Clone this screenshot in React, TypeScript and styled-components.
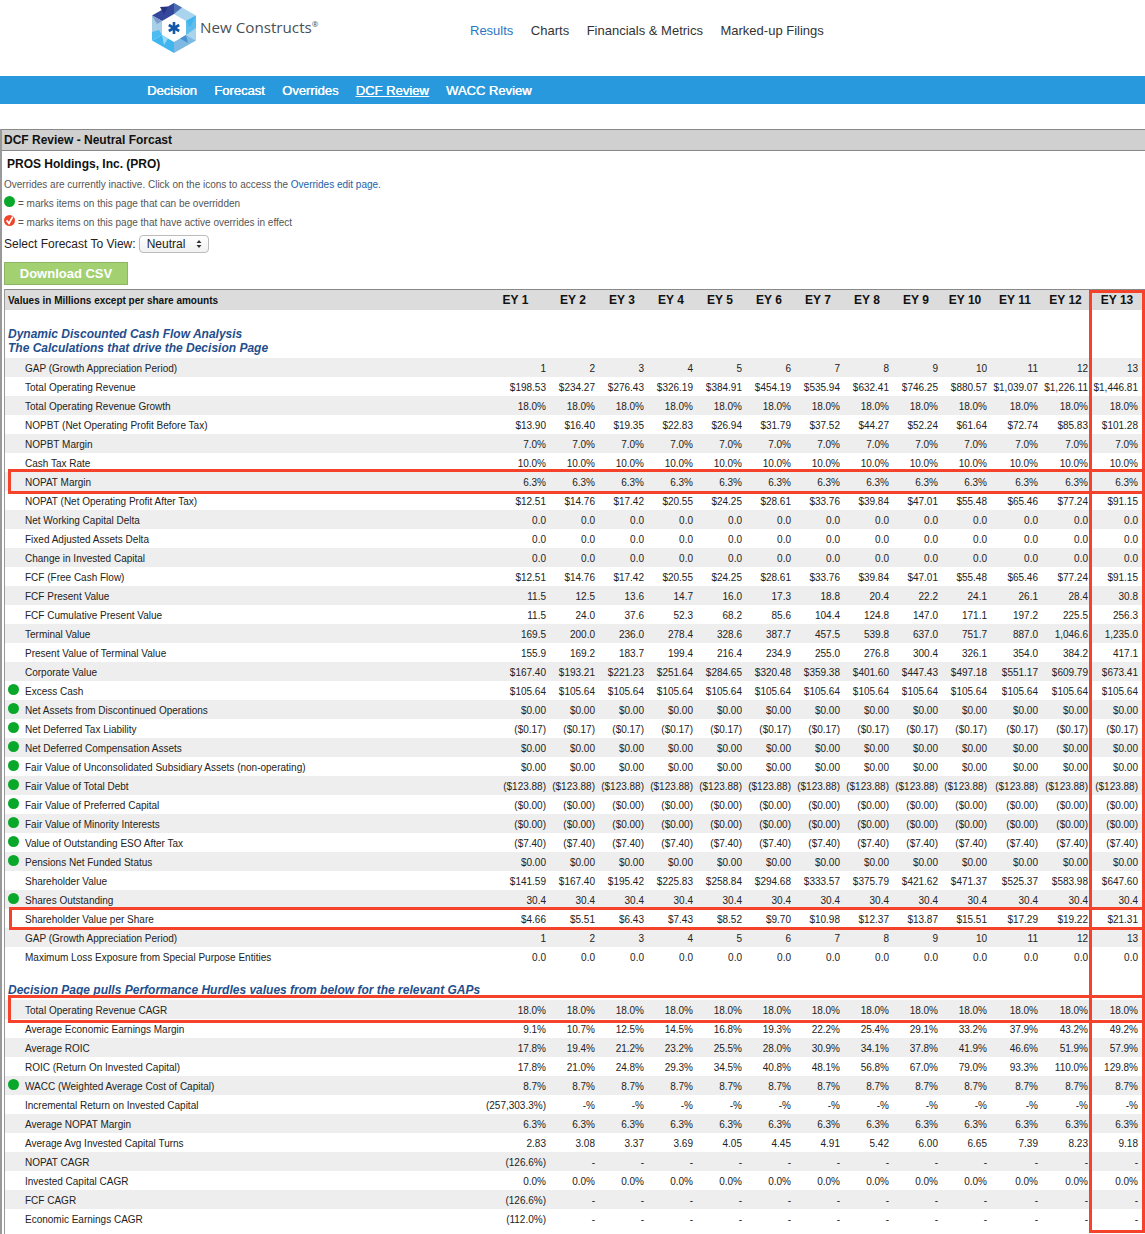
import React from 'react'
import styled, { createGlobalStyle } from 'styled-components'

const FONT = '"Liberation Sans", Arial, sans-serif'

type Row = { label: string; values: string[]; dot?: boolean }

const same = (v: string, n = 13) => Array.from({ length: n }, () => v)
const money = (list: string) => list.split(' ').map((v) => '$' + v)
const pct = (list: string) => list.split(' ').map((v) => v + '%')
const gap = Array.from({ length: 13 }, (_, i) => String(i + 1))
const nopat = money('12.51 14.76 17.42 20.55 24.25 28.61 33.76 39.84 47.01 55.48 65.46 77.24 91.15')

const calcRows: Row[] = [
  { label: 'GAP (Growth Appreciation Period)', values: gap },
  { label: 'Total Operating Revenue', values: money('198.53 234.27 276.43 326.19 384.91 454.19 535.94 632.41 746.25 880.57 1,039.07 1,226.11 1,446.81') },
  { label: 'Total Operating Revenue Growth', values: same('18.0%') },
  { label: 'NOPBT (Net Operating Profit Before Tax)', values: money('13.90 16.40 19.35 22.83 26.94 31.79 37.52 44.27 52.24 61.64 72.74 85.83 101.28') },
  { label: 'NOPBT Margin', values: same('7.0%') },
  { label: 'Cash Tax Rate', values: same('10.0%') },
  { label: 'NOPAT Margin', values: same('6.3%') },
  { label: 'NOPAT (Net Operating Profit After Tax)', values: nopat },
  { label: 'Net Working Capital Delta', values: same('0.0') },
  { label: 'Fixed Adjusted Assets Delta', values: same('0.0') },
  { label: 'Change in Invested Capital', values: same('0.0') },
  { label: 'FCF (Free Cash Flow)', values: nopat },
  { label: 'FCF Present Value', values: '11.5 12.5 13.6 14.7 16.0 17.3 18.8 20.4 22.2 24.1 26.1 28.4 30.8'.split(' ') },
  { label: 'FCF Cumulative Present Value', values: '11.5 24.0 37.6 52.3 68.2 85.6 104.4 124.8 147.0 171.1 197.2 225.5 256.3'.split(' ') },
  { label: 'Terminal Value', values: '169.5 200.0 236.0 278.4 328.6 387.7 457.5 539.8 637.0 751.7 887.0 1,046.6 1,235.0'.split(' ') },
  { label: 'Present Value of Terminal Value', values: '155.9 169.2 183.7 199.4 216.4 234.9 255.0 276.8 300.4 326.1 354.0 384.2 417.1'.split(' ') },
  { label: 'Corporate Value', values: money('167.40 193.21 221.23 251.64 284.65 320.48 359.38 401.60 447.43 497.18 551.17 609.79 673.41') },
  { label: 'Excess Cash', values: same('$105.64'), dot: true },
  { label: 'Net Assets from Discontinued Operations', values: same('$0.00'), dot: true },
  { label: 'Net Deferred Tax Liability', values: same('($0.17)'), dot: true },
  { label: 'Net Deferred Compensation Assets', values: same('$0.00'), dot: true },
  { label: 'Fair Value of Unconsolidated Subsidiary Assets (non-operating)', values: same('$0.00'), dot: true },
  { label: 'Fair Value of Total Debt', values: same('($123.88)'), dot: true },
  { label: 'Fair Value of Preferred Capital', values: same('($0.00)'), dot: true },
  { label: 'Fair Value of Minority Interests', values: same('($0.00)'), dot: true },
  { label: 'Value of Outstanding ESO After Tax', values: same('($7.40)'), dot: true },
  { label: 'Pensions Net Funded Status', values: same('$0.00'), dot: true },
  { label: 'Shareholder Value', values: money('141.59 167.40 195.42 225.83 258.84 294.68 333.57 375.79 421.62 471.37 525.37 583.98 647.60') },
  { label: 'Shares Outstanding', values: same('30.4'), dot: true },
  { label: 'Shareholder Value per Share', values: money('4.66 5.51 6.43 7.43 8.52 9.70 10.98 12.37 13.87 15.51 17.29 19.22 21.31') },
  { label: 'GAP (Growth Appreciation Period)', values: gap },
  { label: 'Maximum Loss Exposure from Special Purpose Entities', values: same('0.0') },
]

const hurdleRows: Row[] = [
  { label: 'Total Operating Revenue CAGR', values: same('18.0%') },
  { label: 'Average Economic Earnings Margin', values: pct('9.1 10.7 12.5 14.5 16.8 19.3 22.2 25.4 29.1 33.2 37.9 43.2 49.2') },
  { label: 'Average ROIC', values: pct('17.8 19.4 21.2 23.2 25.5 28.0 30.9 34.1 37.8 41.9 46.6 51.9 57.9') },
  { label: 'ROIC (Return On Invested Capital)', values: pct('17.8 21.0 24.8 29.3 34.5 40.8 48.1 56.8 67.0 79.0 93.3 110.0 129.8') },
  { label: 'WACC (Weighted Average Cost of Capital)', values: same('8.7%'), dot: true },
  { label: 'Incremental Return on Invested Capital', values: ['(257,303.3%)', ...same('-%', 12)] },
  { label: 'Average NOPAT Margin', values: same('6.3%') },
  { label: 'Average Avg Invested Capital Turns', values: '2.83 3.08 3.37 3.69 4.05 4.45 4.91 5.42 6.00 6.65 7.39 8.23 9.18'.split(' ') },
  { label: 'NOPAT CAGR', values: ['(126.6%)', ...same('-', 12)] },
  { label: 'Invested Capital CAGR', values: same('0.0%') },
  { label: 'FCF CAGR', values: ['(126.6%)', ...same('-', 12)] },
  { label: 'Economic Earnings CAGR', values: ['(112.0%)', ...same('-', 12)] },
]

const colWidths = [477, 66, 49, 49, 49, 49, 49, 49, 49, 49, 49, 51, 50, 55]

const DataRows = ({ rows }: { rows: Row[] }) => (
  <>
    {rows.map((row, i) => (
      <BodyRow key={i} $striped={i % 2 === 0}>
        <LabelCell>
          <LabelInner>
            <DotSlot>{row.dot && <GreenDot />}</DotSlot>
            {row.label}
          </LabelInner>
        </LabelCell>
        {row.values.map((v, j) => (
          <ValueCell key={j} $last={j === 12}>{v}</ValueCell>
        ))}
      </BodyRow>
    ))}
  </>
)

const Logo = () => (
  <svg width="44" height="50" viewBox="0 0 44 50">
    <polygon points="22,0 22,11 10,18 0,12.5" fill="#34479b" />
    <polygon points="22,0 44,12.5 34,18 22,11" fill="#a9d4ee" />
    <polygon points="44,12.5 44,37.5 34,32 34,18" fill="#5fbdec" />
    <polygon points="44,37.5 22,50 22,39 34,32" fill="#7db9e2" />
    <polygon points="22,50 0,37.5 10,32 22,39" fill="#3fb6f0" />
    <polygon points="0,37.5 0,12.5 10,18 10,32" fill="#a8cfe8" />
    <polygon points="0,12.5 10,18 5,21" fill="#7f9ccc" />
    <polygon points="22,0 30,4.5 22,11" fill="#4f6fb5" />
    <polygon points="8,4 16,3.5 12,11" fill="#26337f" />
    <polygon points="34,18 44,12.5 38,24" fill="#3db5ee" />
    <polygon points="34,32 44,25 44,37.5" fill="#a9d4ee" />
    <polygon points="0,37.5 10,32 7,27 0,29" fill="#4dbcf0" />
    <polygon points="34,32 28,35.5 36,40" fill="#4a8fd0" />
    <polygon points="10,32 16,35.5 12,42" fill="#9fd8f5" />
    <g stroke="#1458a8" strokeWidth="2.6" strokeLinecap="butt">
      <line x1="22" y1="19" x2="22" y2="31" />
      <line x1="16.8" y1="22" x2="27.2" y2="28" />
      <line x1="27.2" y1="22" x2="16.8" y2="28" />
    </g>
  </svg>
)

const App = () => {
  return (
    <Page>
      <GlobalStyle />
      <TopBar>
        <Brand>
          <Logo />
          <BrandName>New Constructs<sup>®</sup></BrandName>
        </Brand>
        <MainNav>
          <MainLink $active>Results</MainLink>
          <MainLink>Charts</MainLink>
          <MainLink>Financials &amp; Metrics</MainLink>
          <MainLink>Marked-up Filings</MainLink>
        </MainNav>
      </TopBar>
      <SubNav>
        <SubLink>Decision</SubLink>
        <SubLink>Forecast</SubLink>
        <SubLink>Overrides</SubLink>
        <SubLink $active>DCF Review</SubLink>
        <SubLink>WACC Review</SubLink>
      </SubNav>
      <Panel>
        <TitleBar>DCF Review - Neutral Forcast</TitleBar>
        <PanelBody>
          <Company>PROS Holdings, Inc. (PRO)</Company>
          <Notice>
            Overrides are currently inactive. Click on the icons to access the <a>Overrides edit page.</a>
          </Notice>
          <Legend>
            <GreenDot />= marks items on this page that can be overridden
          </Legend>
          <Legend>
            <svg width="11" height="11" viewBox="0 0 11 11">
              <circle cx="5.5" cy="5.5" r="5.5" fill="#f0452b" />
              <path d="M2.6 5.4 L5 8.4 L8.8 1.6" fill="none" stroke="#fff" strokeWidth="1.8" />
            </svg>
            = marks items on this page that have active overrides in effect
          </Legend>
          <SelectRow>
            Select Forecast To View:
            <SelectWrap>
              <ForecastSelect defaultValue="Neutral">
                <option>Neutral</option>
                <option>Bullish</option>
                <option>Bearish</option>
              </ForecastSelect>
              <SelectArrows width="6" height="10" viewBox="0 0 6 10">
                <path d="M0.5 4 L3 1 L5.5 4 Z M0.5 6 L3 9 L5.5 6 Z" fill="#333" />
              </SelectArrows>
            </SelectWrap>
          </SelectRow>
          <DownloadButton>Download CSV</DownloadButton>
          <TableWrap>
            <ReviewTable>
              <colgroup>
                {colWidths.map((w, i) => (
                  <col key={i} style={{ width: w }} />
                ))}
              </colgroup>
              <thead>
                <tr>
                  <UnitsCell>Values in Millions except per share amounts</UnitsCell>
                  {gap.map((n, i) => (
                    <YearCell key={n} $last={i === 12}>EY {n}</YearCell>
                  ))}
                </tr>
              </thead>
              <tbody>
                <tr>
                  <SectionCell colSpan={14} $height={48}>
                    Dynamic Discounted Cash Flow Analysis
                    <br />
                    The Calculations that drive the Decision Page
                  </SectionCell>
                </tr>
                <DataRows rows={calcRows} />
                <tr>
                  <SectionCell colSpan={14} $height={34}>
                    Decision Page pulls Performance Hurdles values from below for the relevant GAPs
                  </SectionCell>
                </tr>
                <DataRows rows={hurdleRows} />
              </tbody>
            </ReviewTable>
            <RowHighlight $top={180} $height={25} $left={3} />
            <RowHighlight $top={618} $height={23} $left={4} />
            <RowHighlight $top={706} $height={28} $left={3} />
            <ColumnHighlight />
          </TableWrap>
        </PanelBody>
      </Panel>
    </Page>
  )
}

export default App

const GlobalStyle = createGlobalStyle`
  html, body {
    margin: 0;
    padding: 0;
    background: #fff;
    overflow: hidden;
  }
  body {
    font-family: ${FONT};
    color: #222;
  }
`

const Page = styled.div`
  display: flex;
  flex-direction: column;
  width: 1145px;
  height: 1234px;
  overflow: hidden;
`

const TopBar = styled.header`
  display: flex;
  flex: none;
  height: 76px;
  box-sizing: border-box;
  padding: 3px 0 0 152px;
`

const Brand = styled.div`
  display: flex;
  height: 50px;
  align-items: center;
  gap: 4px;
  width: 318px;
`

const BrandName = styled.span`
  font-family: "Open Sans", ${FONT};
  font-size: 15.2px;
  color: #4a4f55;
  margin-top: -3px;
  white-space: nowrap;

  sup {
    font-size: 8px;
    vertical-align: 6px;
    line-height: 0;
  }
`

const MainNav = styled.nav`
  display: flex;
  gap: 17.5px;
  height: 54px;
  align-items: center;
`

const MainLink = styled.a<{ $active?: boolean }>`
  font-size: 13px;
  color: ${(p) => (p.$active ? '#2a76c5' : '#333')};
`

const SubNav = styled.nav`
  display: flex;
  flex: none;
  align-items: center;
  gap: 17.3px;
  height: 28px;
  box-sizing: border-box;
  padding-left: 147px;
  background: #2899dc;
`

const SubLink = styled.a<{ $active?: boolean }>`
  font-size: 13px;
  color: #fff;
  text-shadow: 0.4px 0 0 #fff;
  text-decoration: ${(p) => (p.$active ? 'underline' : 'none')};
`

const Panel = styled.section`
  display: flex;
  flex-direction: column;
  flex: 1;
  min-height: 0;
  margin-top: 25px;
  width: 1160px;
  box-sizing: border-box;
  border-left: 2px solid #999;
`

const TitleBar = styled.h1`
  flex: none;
  margin: 0;
  height: 22px;
  box-sizing: border-box;
  padding-left: 2px;
  border-top: 1px solid #888;
  border-bottom: 1px solid #888;
  background: #d0d0d0;
  font-size: 12px;
  line-height: 20px;
  font-weight: bold;
  color: #111;
`

const PanelBody = styled.div`
  display: flex;
  flex-direction: column;
  flex: 1;
  min-height: 0;
  padding-left: 2px;
`

const Company = styled.h2`
  margin: 3px 0 0;
  padding-left: 3px;
  height: 20px;
  font-size: 12px;
  line-height: 20px;
  font-weight: bold;
  color: #111;
`

const Notice = styled.p`
  margin: 2px 0 0;
  height: 17px;
  font-size: 10px;
  line-height: 17px;
  color: #555;

  a {
    color: #1b62a8;
  }
`

const Legend = styled.div`
  display: flex;
  align-items: center;
  gap: 3px;
  height: 19px;
  box-sizing: border-box;
  padding-top: 1px;
  font-size: 10px;
  color: #555;

  svg,
  span {
    margin-top: -4px;
  }
`

const SelectRow = styled.div`
  display: flex;
  align-items: center;
  gap: 3px;
  margin-top: 4px;
  height: 18px;
  font-size: 12px;
  color: #222;
`

const SelectWrap = styled.div`
  position: relative;
  width: 70px;
  height: 18px;
`

const ForecastSelect = styled.select`
  appearance: none;
  width: 100%;
  height: 100%;
  box-sizing: border-box;
  padding: 0 0 0 7px;
  border: 1px solid #bbb;
  border-radius: 4px;
  background: linear-gradient(#fff, #f1f1f1);
  font-family: ${FONT};
  font-size: 12px;
  color: #222;
`

const SelectArrows = styled.svg`
  position: absolute;
  right: 7px;
  top: 4px;
  pointer-events: none;
`

const DownloadButton = styled.button`
  flex: none;
  width: 124px;
  height: 23px;
  margin-top: 9px;
  padding: 0;
  border: 1px solid #8db565;
  background: #a3d172;
  color: #fff;
  font-family: ${FONT};
  font-size: 13px;
  font-weight: bold;
`

const TableWrap = styled.div`
  position: relative;
  flex: 1;
  min-height: 0;
  margin-top: 4px;
  border-left: 1px solid #999;
`

const ReviewTable = styled.table`
  table-layout: fixed;
  border-collapse: collapse;
  width: 1140px;
  font-size: 10px;
  color: #222;
`

const UnitsCell = styled.th`
  height: 20px;
  box-sizing: border-box;
  padding: 1px 0 0 3px;
  border-top: 1px solid #888;
  background: #dcdcdc;
  font-size: 10px;
  font-weight: bold;
  text-align: left;
  color: #111;
  white-space: nowrap;
`

const YearCell = styled.th<{ $last?: boolean }>`
  height: 20px;
  padding: 0 ${(p) => (p.$last ? '1px' : '0')} 0 ${(p) => (p.$last ? '0' : '1px')};
  border-top: 1px solid #888;
  background: #dcdcdc;
  font-size: 12px;
  font-weight: bold;
  text-align: center;
  color: #111;
  white-space: nowrap;
`

const SectionCell = styled.td<{ $height: number }>`
  height: ${(p) => p.$height}px;
  padding: 0 0 3px 3px;
  box-sizing: border-box;
  vertical-align: bottom;
  font-size: 12px;
  line-height: 14px;
  font-weight: bold;
  font-style: italic;
  color: #1f4e8c;
`

const BodyRow = styled.tr<{ $striped: boolean }>`
  height: 19px;
  background: ${(p) => (p.$striped ? '#eeeeee' : '#fff')};
`

const LabelCell = styled.td`
  padding: 1px 0 0 3px;
  white-space: nowrap;
`

const LabelInner = styled.div`
  display: flex;
  align-items: center;
  gap: 6px;
`

const DotSlot = styled.span`
  display: flex;
  flex: none;
  width: 11px;
  height: 11px;
  margin-top: -3px;
`

const GreenDot = styled.span`
  display: block;
  flex: none;
  width: 11px;
  height: 11px;
  border-radius: 50%;
  background: #0aa82a;
`

const ValueCell = styled.td<{ $last?: boolean }>`
  padding: 1px ${(p) => (p.$last ? '7px' : '2px')} 0 0;
  text-align: right;
  white-space: nowrap;
`

const RowHighlight = styled.div<{ $top: number; $height: number; $left: number }>`
  position: absolute;
  top: ${(p) => p.$top}px;
  left: ${(p) => p.$left}px;
  width: 1160px;
  height: ${(p) => p.$height}px;
  box-sizing: border-box;
  border: 3px solid #f4432a;
  pointer-events: none;
`

const ColumnHighlight = styled.div`
  position: absolute;
  top: 1px;
  left: 1084px;
  width: 56px;
  height: 943px;
  box-sizing: border-box;
  border: 3px solid #f4432a;
  pointer-events: none;
`
